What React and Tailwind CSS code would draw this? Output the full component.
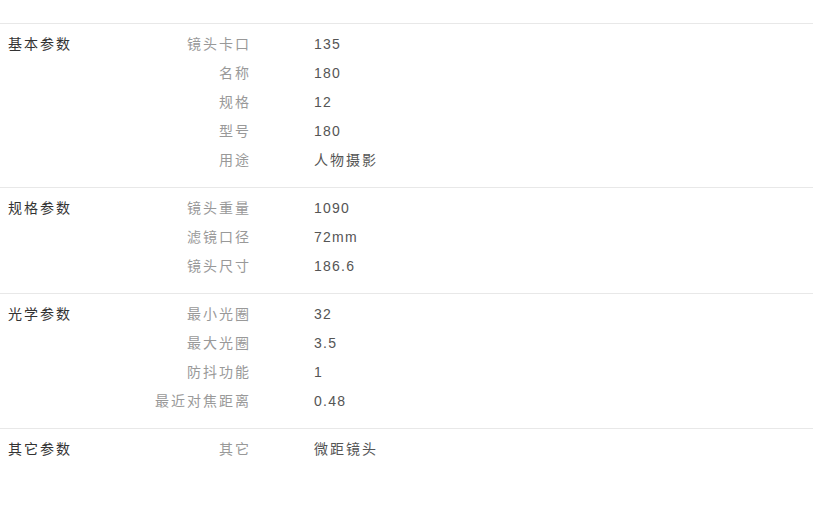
const sections = [
  {
    title: "基本参数",
    rows: [
      ["镜头卡口", "135"],
      ["名称", "180"],
      ["规格", "12"],
      ["型号", "180"],
      ["用途", "人物摄影"],
    ],
  },
  {
    title: "规格参数",
    rows: [
      ["镜头重量", "1090"],
      ["滤镜口径", "72mm"],
      ["镜头尺寸", "186.6"],
    ],
  },
  {
    title: "光学参数",
    rows: [
      ["最小光圈", "32"],
      ["最大光圈", "3.5"],
      ["防抖功能", "1"],
      ["最近对焦距离", "0.48"],
    ],
  },
  {
    title: "其它参数",
    rows: [["其它", "微距镜头"]],
  },
];

// digits are a bit narrower than the CJK text in the original
const isCjk = (s) => /[\u4e00-\u9fff]/.test(s);

export default function App() {
  return (
    <div
      className="min-h-screen w-full bg-white pt-[23px] text-[14px] tracking-[2px]"
      style={{ fontFamily: '"Liberation Sans", "Noto Sans CJK SC", sans-serif' }}
    >
      {sections.map((s) => (
        <div key={s.title} className="flex border-t border-[#e8e8e8] pt-[6px] pb-[12px]">
          <div className="w-[140px] shrink-0 pl-2 leading-[29px] text-[#333]">{s.title}</div>
          <div className="flex flex-col">
            {s.rows.map(([label, value]) => (
              <div key={label} className="flex h-[29px] items-center">
                <div className="w-[111px] text-right text-[#999]">{label}</div>
                <div className={"ml-[63px] text-[#555] " + (isCjk(value) ? "tracking-[2px]" : "tracking-[1.25px]")}>
                  {value}
                </div>
              </div>
            ))}
          </div>
        </div>
      ))}
    </div>
  );
}
